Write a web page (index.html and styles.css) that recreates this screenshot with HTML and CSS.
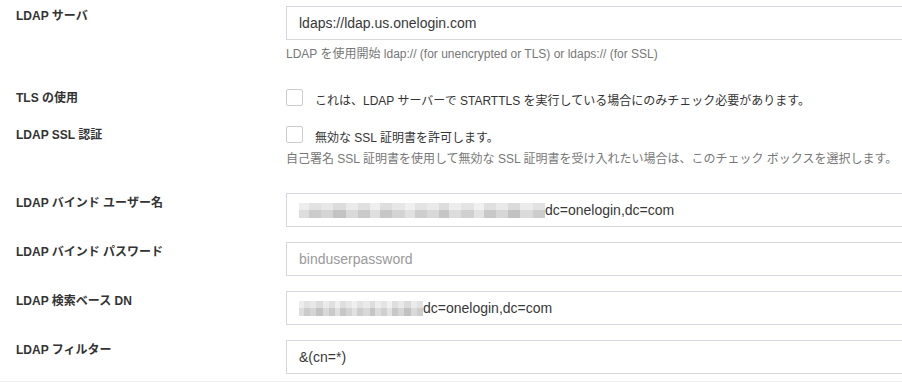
FILE: index.html
```html
<!DOCTYPE html>
<html lang="ja">
<head>
<meta charset="utf-8">
<title>LDAP 設定</title>
<link rel="stylesheet" href="styles.css">
</head>
<body>
<div class="form">
  <div class="row">
    <div class="label">LDAP サーバ</div>
    <div class="field">
      <div class="input">ldaps://ldap.us.onelogin.com</div>
      <div class="help">LDAP を使用開始 ldap:// (for unencrypted or TLS) or ldaps:// (for SSL)</div>
    </div>
  </div>
  <div class="row">
    <div class="label">TLS の使用</div>
    <div class="field">
      <div class="check"><span class="box"></span>これは、LDAP サーバーで STARTTLS を実行している場合にのみチェック必要があります。</div>
    </div>
  </div>
  <div class="row">
    <div class="label">LDAP SSL 認証</div>
    <div class="field">
      <div class="check"><span class="box"></span>無効な SSL 証明書を許可します。</div>
      <div class="help help-check">自己署名 SSL 証明書を使用して無効な SSL 証明書を受け入れたい場合は、このチェック ボックスを選択します。</div>
    </div>
  </div>
  <div class="row">
    <div class="label">LDAP バインド ユーザー名</div>
    <div class="field">
      <div class="input"><span class="blur blur-long"></span>dc=onelogin,dc=com</div>
    </div>
  </div>
  <div class="row">
    <div class="label">LDAP バインド パスワード</div>
    <div class="field">
      <div class="input placeholder">binduserpassword</div>
    </div>
  </div>
  <div class="row">
    <div class="label">LDAP 検索ベース DN</div>
    <div class="field">
      <div class="input"><span class="blur blur-short"></span>dc=onelogin,dc=com</div>
    </div>
  </div>
  <div class="row">
    <div class="label">LDAP フィルター</div>
    <div class="field">
      <div class="input">&amp;(cn=*)</div>
    </div>
  </div>
</div>
</body>
</html>
```
FILE: styles.css
```css
html, body {
  margin: 0;
  padding: 0;
  background: #ffffff;
}
body {
  font-family: "Liberation Sans", "Noto Sans CJK JP", sans-serif;
  color: #333333;
}
.form {
  padding: 6px 0 7px 16px;
  border-bottom: 1px solid #eeeeee;
}
.row {
  display: grid;
  grid-template-columns: 270px minmax(0, 1fr);
  margin-bottom: 15px;
}
.row:last-child {
  margin-bottom: 0;
}
.label {
  font-size: 12px;
  font-weight: bold;
  line-height: 20px;
  color: #333333;
}
.field {
  min-width: 0;
}
.input {
  box-sizing: border-box;
  height: 34px;
  border: 1px solid #d6d8de;
  border-right: 0;
  padding: 0 12px;
  font-size: 14px;
  line-height: 32px;
  color: #383838;
  white-space: nowrap;
  display: flex;
  align-items: center;
}
.placeholder {
  color: #9a9a9a;
}
.help {
  font-size: 12px;
  line-height: 16px;
  color: #777777;
  margin-top: 6px;
  margin-bottom: 11px;
  white-space: nowrap;
}
.help-check {
  margin-top: 4px;
}
.check {
  display: flex;
  align-items: center;
  height: 22px;
  font-size: 12px;
  color: #333333;
  white-space: nowrap;
}
.box {
  box-sizing: border-box;
  width: 17px;
  height: 17px;
  border: 1px solid #cccccc;
  border-radius: 2px;
  background: #ffffff;
  margin-right: 12px;
  margin-top: -3px;
  flex: none;
}
.blur {
  display: inline-block;
  height: 15px;
  flex: none;
  background:
    linear-gradient(to bottom, rgba(255,255,255,0.35) 0 45%, rgba(0,0,0,0.03) 45% 100%),
    linear-gradient(to right,
      #e4e4e4 0 4%, #d2d2d2 4% 9%, #dcdcdc 9% 14%, #c9c9c9 14% 19%, #e0e0e0 19% 24%,
      #d0d0d0 24% 29%, #e6e6e6 29% 33%, #cdcdcd 33% 38%, #dadada 38% 43%, #e8e8e8 43% 47%,
      #d4d4d4 47% 52%, #dfdfdf 52% 57%, #cbcbcb 57% 61%, #e3e3e3 61% 66%, #d6d6d6 66% 71%,
      #e9e9e9 71% 75%, #cecece 75% 80%, #dddddd 80% 85%, #c8c8c8 85% 90%, #e1e1e1 90% 95%,
      #d3d3d3 95% 100%);
}
.blur-long {
  width: 246px;
}
.blur-short {
  width: 124px;
}
```
